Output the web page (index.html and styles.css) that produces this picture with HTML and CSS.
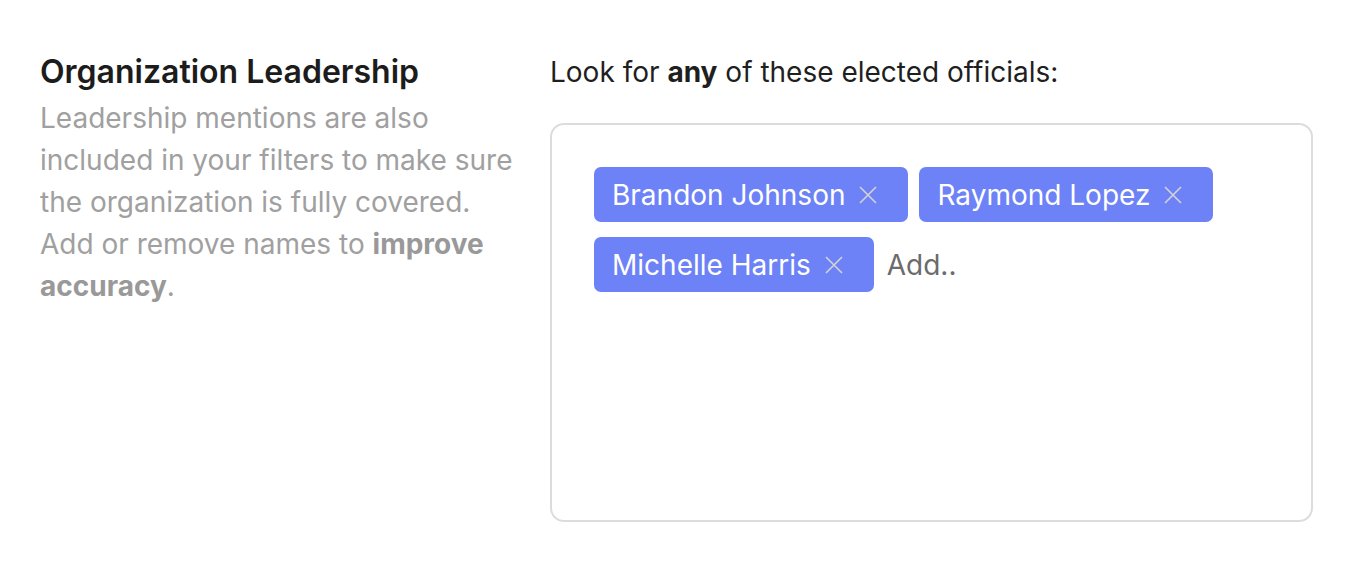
FILE: index.html
```html
<!DOCTYPE html>
<html lang="en">
<head>
    <meta charset="UTF-8">
    <title>Organization Leadership</title>
    <meta name="viewport" content="width=device-width, initial-scale=1">
    <link rel="stylesheet" href="styles.css">
</head>
<body>
<div class="section">
    <!-- Popis sekcie -->
    <div class="section-info">
        <h3 class="section-title">Organization Leadership</h3>
        <p class="section-desc">Leadership mentions are also included in your filters to make sure the organization is fully covered. Add or remove names to <strong>improve accuracy</strong>.</p>
    </div>

    <!-- Zoznam mien -->
    <div class="section-field">
        <div class="field-label">Look for <strong>any</strong> of these elected officials:</div>
        <div class="tag-box">
            <span class="tag">Brandon Johnson <span class="tag-remove"><svg viewBox="0 0 20 20" width="20" height="20"><path d="M2 2L18 18M18 2L2 18" stroke="currentColor" stroke-width="1.6" fill="none"/></svg></span></span>
            <span class="tag">Raymond Lopez <span class="tag-remove"><svg viewBox="0 0 20 20" width="20" height="20"><path d="M2 2L18 18M18 2L2 18" stroke="currentColor" stroke-width="1.6" fill="none"/></svg></span></span>
            <span class="tag">Michelle Harris <span class="tag-remove"><svg viewBox="0 0 20 20" width="20" height="20"><path d="M2 2L18 18M18 2L2 18" stroke="currentColor" stroke-width="1.6" fill="none"/></svg></span></span>
            <span class="tag-input">Add..</span>
        </div>
    </div>
</div>
</body>
</html>
```

FILE: styles.css
```css
body { font-family: Inter, "Noto Sans", sans-serif; background: #fff; margin: 0; padding: 0; color: #1f1f1f; }
.section { display: flex; gap: 30px; padding: 54px 33px 0 40px; }
.section-info { width: 480px; flex: none; }
.section-title { font-size: 32px; font-weight: 600; margin: 0; line-height: 36px; color: #1c1c1c; }
.section-desc { font-size: 28px; line-height: 42px; color: #a0a0a0; margin: 7px 0 0; }
.section-desc strong { font-weight: 700; color: #999; }
.section-field { flex: 1; }
.field-label { font-size: 28px; line-height: 36px; margin-bottom: 33px; color: #1f1f1f; }
.field-label strong { font-weight: 700; }
.tag-box { box-sizing: border-box; border: 2px solid #dcdcdc; border-radius: 14px; height: 399px; padding: 42px 42px 41px; display: flex; flex-wrap: wrap; align-content: flex-start; align-items: center; column-gap: 11px; row-gap: 15px; }
.tag { display: inline-flex; align-items: center; height: 55px; padding: 0 30px 0 18px; background: #6c82f6; color: #fff; border-radius: 7px; font-size: 28px; }
.tag-remove { display: inline-flex; margin-left: 13px; color: #d4d4d4; }
.tag-input { font-size: 28px; color: #6b6b6b; margin-left: 2px; }
```
